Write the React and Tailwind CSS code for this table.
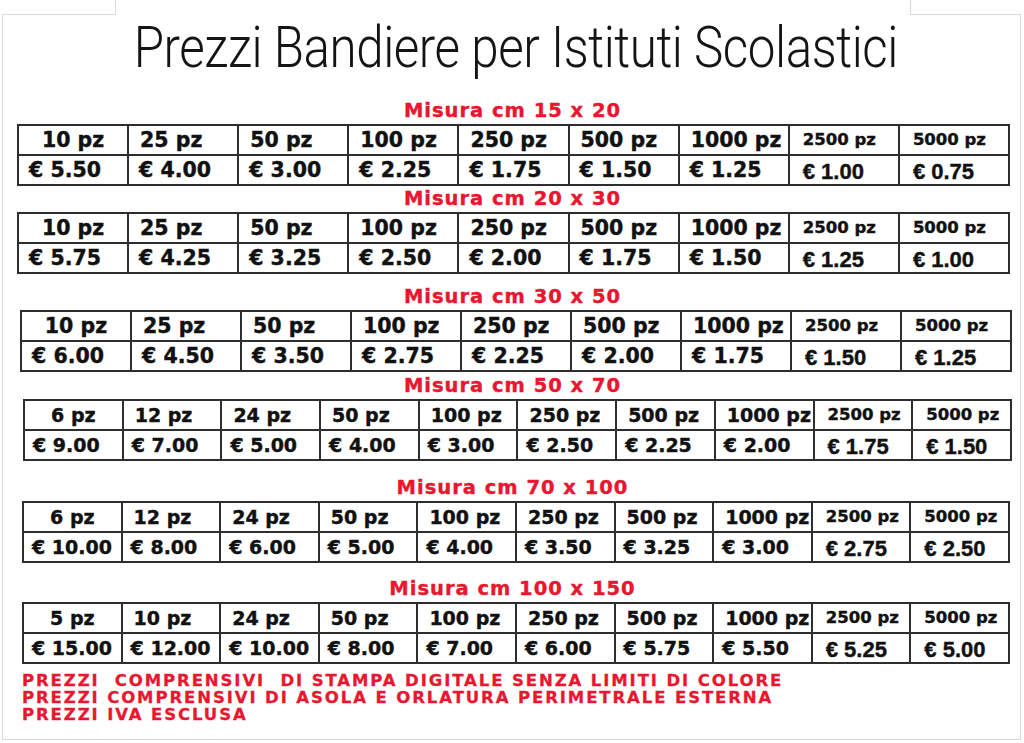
import React from 'react';

const SIZES = [
  {
    title: 'Misura cm 15 x 20', mt: 'mt-[23px]', pos: 'ml-[14px] w-[993px]', big: true,
    qty: ['10 pz', '25 pz', '50 pz', '100 pz', '250 pz', '500 pz', '1000 pz', '2500 pz', '5000 pz'],
    prices: ['€ 5.50', '€ 4.00', '€ 3.00', '€ 2.25', '€ 1.75', '€ 1.50', '€ 1.25', '€ 1.00', '€ 0.75'],
  },
  {
    title: 'Misura cm 20 x 30', mt: 'mt-[3px]', pos: 'ml-[14px] w-[993px]', big: true,
    qty: ['10 pz', '25 pz', '50 pz', '100 pz', '250 pz', '500 pz', '1000 pz', '2500 pz', '5000 pz'],
    prices: ['€ 5.75', '€ 4.25', '€ 3.25', '€ 2.50', '€ 2.00', '€ 1.75', '€ 1.50', '€ 1.25', '€ 1.00'],
  },
  {
    title: 'Misura cm 30 x 50', mt: 'mt-[13px]', pos: 'ml-[17px] w-[992px]', big: true,
    qty: ['10 pz', '25 pz', '50 pz', '100 pz', '250 pz', '500 pz', '1000 pz', '2500 pz', '5000 pz'],
    prices: ['€ 6.00', '€ 4.50', '€ 3.50', '€ 2.75', '€ 2.25', '€ 2.00', '€ 1.75', '€ 1.50', '€ 1.25'],
  },
  {
    title: 'Misura cm 50 x 70', mt: 'mt-[4px]', pos: 'ml-[20px] w-[989px]', big: false,
    qty: ['6 pz', '12 pz', '24 pz', '50 pz', '100 pz', '250 pz', '500 pz', '1000 pz', '2500 pz', '5000 pz'],
    prices: ['€ 9.00', '€ 7.00', '€ 5.00', '€ 4.00', '€ 3.00', '€ 2.50', '€ 2.25', '€ 2.00', '€ 1.75', '€ 1.50'],
  },
  {
    title: 'Misura cm 70 x 100', mt: 'mt-[17px]', pos: 'ml-[19px] w-[988px]', big: false,
    qty: ['6 pz', '12 pz', '24 pz', '50 pz', '100 pz', '250 pz', '500 pz', '1000 pz', '2500 pz', '5000 pz'],
    prices: ['€ 10.00', '€ 8.00', '€ 6.00', '€ 5.00', '€ 4.00', '€ 3.50', '€ 3.25', '€ 3.00', '€ 2.75', '€ 2.50'],
  },
  {
    title: 'Misura cm 100 x 150', mt: 'mt-[16px]', pos: 'ml-[19px] w-[988px]', big: false,
    qty: ['5 pz', '10 pz', '24 pz', '50 pz', '100 pz', '250 pz', '500 pz', '1000 pz', '2500 pz', '5000 pz'],
    prices: ['€ 15.00', '€ 12.00', '€ 10.00', '€ 8.00', '€ 7.00', '€ 6.00', '€ 5.75', '€ 5.50', '€ 5.25', '€ 5.00'],
  },
];

const NOTES = [
  'PREZZI  COMPRENSIVI  DI STAMPA DIGITALE SENZA LIMITI DI COLORE',
  'PREZZI COMPRENSIVI DI ASOLA E ORLATURA PERIMETRALE ESTERNA',
  'PREZZI IVA ESCLUSA',
];

function PriceTable({ size }) {
  const n = size.qty.length;
  const fs = size.big ? 'text-[20.5px]' : 'text-[19px]';
  return (
    <table className={`${size.pos} mt-[3px] table-fixed border-collapse text-[#111] font-['DejaVu_Sans',sans-serif] font-bold [-webkit-text-stroke:0.4px]`}>
      <tbody>
        <tr className="h-[30px]">
          {size.qty.map((q, i) => {
            const narrow = i >= n - 2;
            return (
              <td key={q}
                className={`border-2 border-[#2e2e2e] p-0 leading-none whitespace-pre
                  ${narrow ? 'text-[16.5px] pl-[13px]' : fs}
                  ${i === 0 ? 'text-center' : narrow ? '' : 'pl-[11px]'}`}>
                {q}
              </td>
            );
          })}
        </tr>
        <tr className="h-[30px]">
          {size.prices.map((p, i) => {
            const narrow = i >= n - 2;
            return (
              <td key={i}
                className={`border-2 border-[#2e2e2e] p-0 leading-none whitespace-pre
                  ${narrow ? "font-['Liberation_Sans',sans-serif] text-[22px] pl-[13px] pt-[4px]" : `${fs} ${size.big ? 'pl-[10px]' : 'pl-[8px]'}`}`}>
                {p}
              </td>
            );
          })}
        </tr>
      </tbody>
    </table>
  );
}

export default function App() {
  return (
    <div className="w-[1024px] h-[743px] bg-white overflow-hidden">
      <div className="ml-[2px] w-[1019px]">
        {/* tab edge along the top */}
        <div className="flex h-[15px]">
          <div className="w-[114px] border-b border-r border-[#d6dadd]" />
          <div className="flex-1" />
          <div className="w-[111px] border-b border-l border-[#d6dadd]" />
        </div>

        <div className="h-[725px] border-x border-b border-[#d6dadd] pt-[3px]">
          <h1 className="h-[60px] text-center leading-[60px] font-['Roboto',sans-serif] font-light text-[57px] text-[#141414] pl-[9px]">
            <span className="inline-block scale-x-[0.865] tracking-[-0.5px] whitespace-nowrap">
              Prezzi Bandiere per Istituti Scolastici
            </span>
          </h1>

          {SIZES.map(s => (
            <section key={s.title} className={s.mt}>
              <h2 className="h-[20px] text-center leading-[20px] font-['DejaVu_Sans',sans-serif] font-bold text-[19.5px] tracking-[1px] text-[#e8172f] pl-[2px] [-webkit-text-stroke:0.4px]">
                {s.title}
              </h2>
              <PriceTable size={s} />
            </section>
          ))}

          {/* notes */}
          <div className="mt-[8px] ml-[19px] font-['DejaVu_Sans',sans-serif] font-bold text-[16.5px] tracking-[1.9px] leading-[17px] text-[#e8172f] [-webkit-text-stroke:0.3px]">
            {NOTES.map(t => (
              <p key={t} className="whitespace-pre">{t}</p>
            ))}
          </div>
        </div>
      </div>
    </div>
  );
}
